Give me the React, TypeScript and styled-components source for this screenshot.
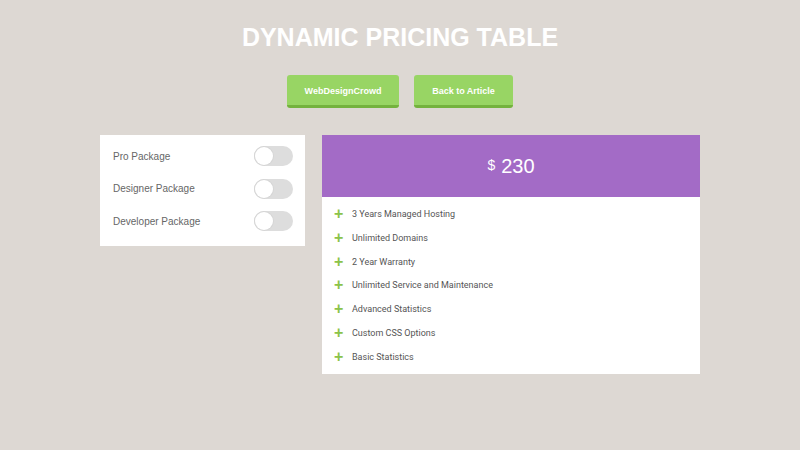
import React, { useState } from 'react'
import styled, { createGlobalStyle } from 'styled-components'

const GlobalStyle = createGlobalStyle`
  html, body {
    margin: 0;
    padding: 0;
    background: #ddd8d3;
  }
  * { box-sizing: border-box; }
`

const packages = ['Pro Package', 'Designer Package', 'Developer Package']

const features = [
  '3 Years Managed Hosting',
  'Unlimited Domains',
  '2 Year Warranty',
  'Unlimited Service and Maintenance',
  'Advanced Statistics',
  'Custom CSS Options',
  'Basic Statistics',
]

const App: React.FC = () => {
  const [checked, setChecked] = useState<boolean[]>([false, false, false])

  const toggle = (i: number) => {
    setChecked(checked.map((c, j) => (j === i ? !c : c)))
  }

  return (
    <>
      <GlobalStyle />
      <Page>
        <Title>DYNAMIC PRICING TABLE</Title>
        <ButtonRow>
          <GreenButton width={112}>WebDesignCrowd</GreenButton>
          <GreenButton width={99}>Back to Article</GreenButton>
        </ButtonRow>
        <Content>
          <Options>
            {packages.map((name, i) => (
              <OptionRow key={name}>
                <OptionLabel>{name}</OptionLabel>
                <Switch on={checked[i]} onClick={() => toggle(i)}>
                  <Knob on={checked[i]} />
                </Switch>
              </OptionRow>
            ))}
          </Options>
          <Table>
            <PriceHeader>
              <Currency>$</Currency>
              <Amount>230</Amount>
            </PriceHeader>
            <FeatureList>
              {features.map((f) => (
                <Feature key={f}>
                  <Plus>+</Plus>
                  <FeatureText>{f}</FeatureText>
                </Feature>
              ))}
            </FeatureList>
          </Table>
        </Content>
      </Page>
    </>
  )
}

const Page = styled.div`
  width: 800px;
  height: 450px;
  padding-top: 21px;
  display: flex;
  flex-direction: column;
  align-items: center;
`

const Title = styled.h1`
  margin: 0;
  font-family: 'Liberation Sans', Arial, sans-serif;
  font-size: 25px;
  line-height: 32px;
  font-weight: 700;
  color: #ffffff;
`

const ButtonRow = styled.div`
  display: flex;
  gap: 15px;
  margin-top: 22px;
`

const GreenButton = styled.div<{ width: number }>`
  width: ${(p) => p.width}px;
  height: 33px;
  border-radius: 3px;
  background: #98d564;
  border-bottom: 3px solid #74b23e;
  display: flex;
  align-items: center;
  justify-content: center;
  font-family: 'Liberation Sans', Arial, sans-serif;
  font-size: 9px;
  font-weight: 700;
  color: #ffffff;
  padding-top: 1px;
`

const Content = styled.div`
  display: flex;
  align-items: flex-start;
  gap: 17px;
  margin-top: 27px;
`

const Options = styled.div`
  width: 205px;
  background: #ffffff;
  padding: 11px 12px 14.5px 13px;
  display: flex;
  flex-direction: column;
  gap: 12.5px;
`

const OptionRow = styled.div`
  display: flex;
  align-items: center;
  justify-content: space-between;
  height: 20px;
`

const OptionLabel = styled.span`
  font-family: 'Liberation Sans', Arial, sans-serif;
  font-size: 10px;
  color: #666666;
`

const Switch = styled.div<{ on: boolean }>`
  position: relative;
  width: 39px;
  height: 20px;
  border-radius: 10px;
  background: ${(p) => (p.on ? '#98d564' : '#dddddd')};
  cursor: pointer;
`

const Knob = styled.div<{ on: boolean }>`
  position: absolute;
  top: 1px;
  left: ${(p) => (p.on ? '20px' : '1px')};
  width: 18px;
  height: 18px;
  border-radius: 50%;
  background: #ffffff;
  box-shadow: 0 0 0 1px #d6d6d6;
`

const Table = styled.div`
  width: 378px;
  background: #ffffff;
`

const PriceHeader = styled.div`
  height: 62px;
  background: #a36bc6;
  display: flex;
  align-items: center;
  justify-content: center;
  gap: 6px;
  color: #ffffff;
  font-family: 'Liberation Sans', Arial, sans-serif;
`

const Currency = styled.span`
  font-size: 14px;
  margin-bottom: 2px;
`

const Amount = styled.span`
  font-size: 20px;
`

const FeatureList = styled.ul`
  list-style: none;
  margin: 0;
  padding: 5px 0 5px 12px;
`

const Feature = styled.li`
  display: flex;
  align-items: center;
  height: 23.85px;
`

const Plus = styled.span`
  width: 18px;
  font-family: 'Liberation Sans', Arial, sans-serif;
  font-size: 16px;
  font-weight: 700;
  color: #8bc34a;
  line-height: 1;
`

const FeatureText = styled.span`
  font-family: Roboto, 'Liberation Sans', sans-serif;
  font-size: 9px;
  color: #555555;
`

export default App
